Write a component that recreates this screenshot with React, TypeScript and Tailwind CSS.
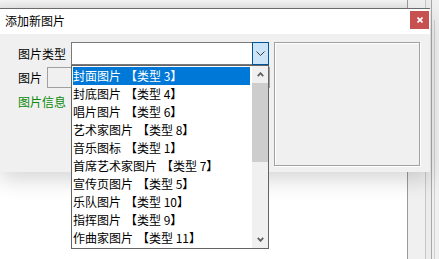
import React from "react";

const items: [string, string][] = [
  ["封面图片", "【类型 3】"],
  ["封底图片", "【类型 4】"],
  ["唱片图片", "【类型 6】"],
  ["艺术家图片", "【类型 8】"],
  ["音乐图标", "【类型 1】"],
  ["首席艺术家图片", "【类型 7】"],
  ["宣传页图片", "【类型 5】"],
  ["乐队图片", "【类型 10】"],
  ["指挥图片", "【类型 9】"],
  ["作曲家图片", "【类型 11】"],
];

export default function App() {
  return (
    <div
      className="relative w-[439px] h-[259px] overflow-hidden bg-white text-[12px] text-black"
      style={{ fontFamily: '"Noto Sans CJK SC", "Noto Sans", sans-serif' }}
    >
      {/* desktop background */}
      <div className="absolute left-0 top-0 w-[439px] h-[8px] bg-gradient-to-b from-[#f4f4f4] to-[#e6e6e6]" />
      <div className="absolute left-[407px] top-0 w-[1px] h-[259px] bg-[#9a9a9a]" />
      <div className="absolute left-[408px] top-0 w-[17px] h-[259px] bg-[#f0f0f0]" />
      <div className="absolute left-[425px] top-0 w-[1px] h-[259px] bg-[#c8c8c8]" />
      <div className="absolute left-[426px] top-0 w-[5px] h-[259px] bg-[#ececec]" />
      <div className="absolute left-[431px] top-0 w-[1px] h-[259px] bg-[#a8a8a8]" />
      <div className="absolute left-[432px] top-0 w-[7px] h-[259px] bg-[#f0f0f0]" />
      <div className="absolute left-[434px] top-[20px] w-[1px] h-[239px] bg-[#d0d0d0]" />

      {/* dialog window */}
      <div className="absolute left-0 top-[8px] w-[430px] h-[164px] flex flex-col border-t border-[#6a6a6a] bg-[#f0f0f0] shadow-[0_8px_20px_rgba(0,0,0,0.16)]">
        <div className="h-[25px] bg-white flex items-start justify-between">
          <div className="pl-[5px] pt-[4px] leading-[16px]">添加新图片</div>
          <div className="mt-[2px] mr-[1px] w-[19px] h-[18px] bg-[#c75050] flex items-center justify-center">
            <svg width="6" height="6" viewBox="0 0 6 6">
              <path d="M0.5 0.5 L5.5 5.5 M5.5 0.5 L0.5 5.5" stroke="white" strokeWidth="1.6" />
            </svg>
          </div>
        </div>
        <div className="flex-1 flex pl-[18px] pt-[8px]">
          <div className="flex flex-col">
            <div className="flex items-center h-[23px]">
              <div className="w-[53px] leading-[16px]">图片类型</div>
              <div className="w-[198px] h-[23px] flex bg-white border border-[#7a7a7a]">
                <div className="flex-1" />
                <div className="w-[17px] h-[23px] -mt-[1px] -mr-[1px] bg-[#cce4f7] border border-[#005499] flex items-center justify-center">
                  <svg width="9" height="5" viewBox="0 0 9 5">
                    <path d="M0.5 0.5 L4.5 4.5 L8.5 0.5" stroke="#3c3c3c" strokeWidth="1" fill="none" />
                  </svg>
                </div>
              </div>
            </div>
            <div className="flex items-center h-[21px] mt-[2px]">
              <div className="w-[29px] leading-[16px]">图片</div>
              <div className="w-[223px] h-[21px] bg-[#f0f0f0] border border-[#a0a0a0]" />
            </div>
            <div className="mt-[6px] leading-[16px] text-[#0a8a0a]">图片信息</div>
          </div>
          <div className="ml-[4px] w-[146px] h-[124px] border-t border-l border-[#a0a0a0] shadow-[1px_1px_0_#ffffff]">
            <div className="w-full h-full border-r border-b border-[#a0a0a0] shadow-[inset_1px_1px_0_#ffffff]" />
          </div>
        </div>
      </div>

      {/* dropdown list */}
      <div className="absolute left-[71px] top-[65px] w-[198px] h-[184px] bg-white border border-[#646464] flex">
        <div className="flex-1 flex flex-col pt-[1px] pl-[1px] pr-[2px]">
          {items.map(([name, tag], i) => (
            <div
              key={i}
              className={
                "h-[18px] leading-[18px] whitespace-nowrap flex " +
                (i === 0 ? "bg-[#0078d7] text-white" : "")
              }
            >
              <span>{name}</span>
              <span className="ml-[4px]">{tag}</span>
            </div>
          ))}
        </div>
        <div className="w-[16px] h-full bg-[#f0f0f0] flex flex-col">
          <div className="h-[17px] flex items-center justify-center">
            <svg width="7" height="5" viewBox="0 0 7 5">
              <path d="M0.8 4.2 L3.5 1.2 L6.2 4.2" stroke="#606060" strokeWidth="1.8" fill="none" />
            </svg>
          </div>
          <div className="h-[79px] bg-[#cdcdcd]" />
          <div className="flex-1" />
          <div className="h-[17px] flex items-center justify-center">
            <svg width="7" height="5" viewBox="0 0 7 5">
              <path d="M0.8 0.8 L3.5 3.8 L6.2 0.8" stroke="#606060" strokeWidth="1.8" fill="none" />
            </svg>
          </div>
        </div>
      </div>
    </div>
  );
}
